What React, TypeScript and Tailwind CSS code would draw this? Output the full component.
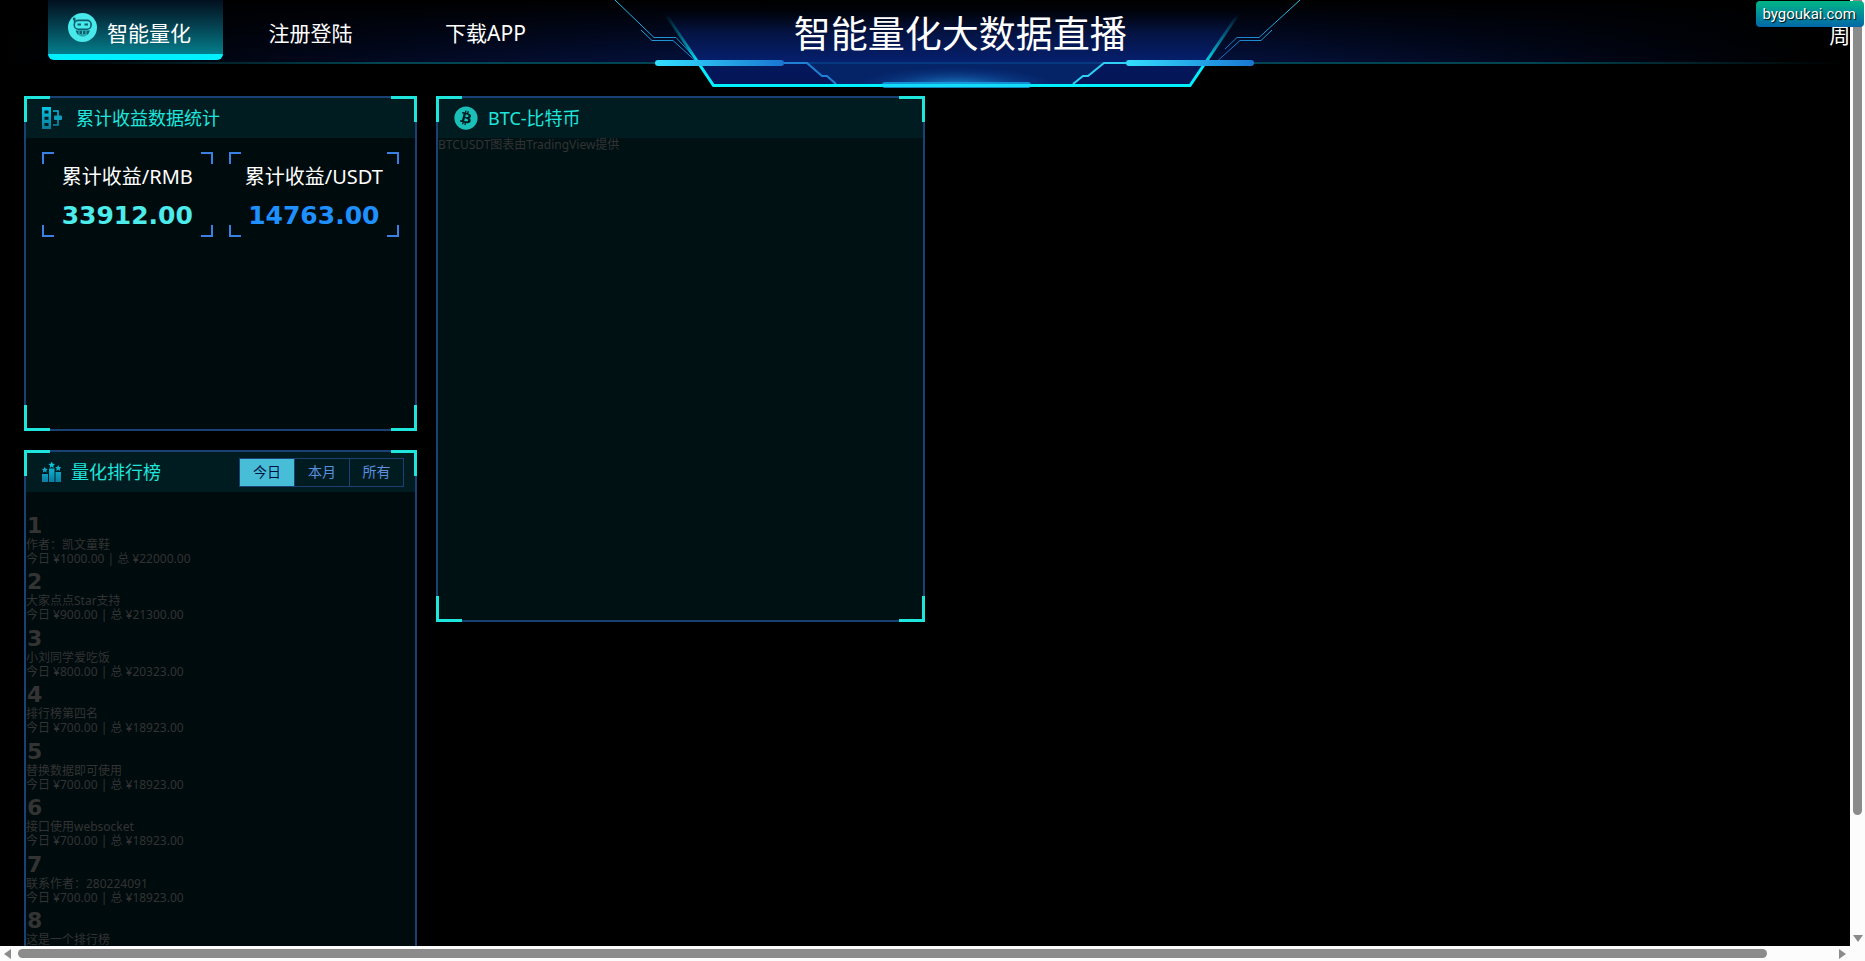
import {FC, ReactNode, useState} from "react";
import {FaBitcoin} from "react-icons/fa";

const navItems = ["智能量化", "注册登陆", "下载APP"];
const ranges = ["今日", "本月", "所有"];

const ranking = [
    {name: "作者：凯文童鞋", today: "1000.00", total: "22000.00"},
    {name: "大家点点Star支持", today: "900.00", total: "21300.00"},
    {name: "小刘同学爱吃饭", today: "800.00", total: "20323.00"},
    {name: "排行榜第四名", today: "700.00", total: "18923.00"},
    {name: "替换数据即可使用", today: "700.00", total: "18923.00"},
    {name: "接口使用websocket", today: "700.00", total: "18923.00"},
    {name: "联系作者：280224091", today: "700.00", total: "18923.00"},
    {name: "这是一个排行榜", today: "700.00", total: "18923.00"},
];

const RobotIcon: FC = () => (
    <svg width="29" height="29" viewBox="0 0 29 29" fill="none">
        <circle cx="14.5" cy="14.5" r="14.5" fill="#48e9ea"/>
        <circle cx="6.2" cy="6" r="1.4" fill="#0b5e6b"/>
        <path d="M6.5 6v3.5" stroke="#0b5e6b" strokeWidth="1.4"/>
        <rect x="6.3" y="7.4" width="16.8" height="8.8" rx="4" stroke="#0b5e6b" strokeWidth="1.6"/>
        <path d="M9.5 11.5h3.5M16.5 11.5h3.5" stroke="#0b5e6b" strokeWidth="2"/>
        <path d="M7.5 17.5h14.5l-2 4h-10.5z" fill="#0b5e6b"/>
        <path d="M11 18v3M14.5 18v3M18 18v3" stroke="#48e9ea" strokeWidth="0.8"/>
        <path d="M10.5 22.3h8.5q-4.2 2.6-8.5 0z" fill="#1a919c"/>
    </svg>
);

const StatsIcon: FC = () => (
    <svg width="20" height="22" viewBox="0 0 20 22" fill="none">
        <defs>
            <linearGradient id="stats" x1="0" y1="0" x2="0" y2="22" gradientUnits="userSpaceOnUse">
                <stop stopColor="#08c8e8"/>
                <stop offset="1" stopColor="#0b7896"/>
            </linearGradient>
        </defs>
        <path d="M0 0h9v22h-9zM2.500 3.500v3h4v-3zM2.500 9.800v3h4v-3zM2.500 16.100v3h4v-3z" fill="url(#stats)" fillRule="evenodd"/>
        <path d="M11 4h5v14h-5" stroke="url(#stats)" strokeWidth="1.6"/>
        <rect x="12" y="8.5" width="8" height="4.5" rx="1" fill="#0e9fbc"/>
    </svg>
);

const RankIcon: FC = () => (
    <svg width="19" height="20" viewBox="0 0 19 20">
        <defs>
            <linearGradient id="rank" x1="0" y1="0" x2="0" y2="20" gradientUnits="userSpaceOnUse">
                <stop stopColor="#0ccfe6"/>
                <stop offset="1" stopColor="#0b7ba0"/>
            </linearGradient>
        </defs>
        <g fill="url(#rank)">
            <path d="M0 12h6v8h-6zM7 6.5h5.500v13.500h-5.500zM13.500 10h5.500v10h-5.500z"/>
            <path d="M9.700 -.4l1 2.100 2.300.3-1.700 1.600.4 2.300-2-1.200-2 1.200.4-2.300-1.700-1.600 2.300-.3z"/>
            <path d="M2.800 4.700l.9 2 2.100.2-1.500 1.500.4 2.200-1.900-1.100-1.900 1.100.4-2.200-1.500-1.500 2.100-.2z"/>
            <path d="M16.200 3l.9 2 2.100.2-1.500 1.500.4 2.200-1.900-1.100-1.900 1.100.4-2.200-1.500-1.500 2.100-.2z"/>
        </g>
    </svg>
);

// Trapezoid plate and circuit lines behind the title
const TitleFrame: FC = () => (
    <svg className="absolute inset-0" width="690" height="92" viewBox="615 0 690 92" fill="none">
        <defs>
            <linearGradient id="plate" x1="0" y1="0" x2="0" y2="86" gradientUnits="userSpaceOnUse">
                <stop stopColor="#000000"/>
                <stop offset="0.12" stopColor="#000208"/>
                <stop offset="0.4" stopColor="#041445"/>
                <stop offset="0.72" stopColor="#06206f"/>
                <stop offset="0.73" stopColor="#04185c"/>
                <stop offset="1" stopColor="#041556"/>
            </linearGradient>
            <linearGradient id="edge" x1="0" y1="15" x2="0" y2="66" gradientUnits="userSpaceOnUse">
                <stop stopColor="#00f0ff" stopOpacity="0"/>
                <stop offset="0.3" stopColor="#00c8d4" stopOpacity="0.3"/>
                <stop offset="1" stopColor="#00f0ff"/>
            </linearGradient>
            <linearGradient id="bar" x1="0" y1="0" x2="1" y2="0">
                <stop stopColor="#33dfff"/>
                <stop offset="1" stopColor="#1976d2"/>
            </linearGradient>
            <linearGradient id="wireLeft" x1="615" y1="0" x2="697" y2="60" gradientUnits="userSpaceOnUse">
                <stop stopColor="#2cc3e6"/>
                <stop offset="1" stopColor="#1976c8"/>
            </linearGradient>
            <linearGradient id="wireRight" x1="1300" y1="0" x2="1220" y2="60" gradientUnits="userSpaceOnUse">
                <stop stopColor="#2cc3e6"/>
                <stop offset="1" stopColor="#1668c0"/>
            </linearGradient>
            <radialGradient id="glow">
                <stop stopColor="#1e9be0" stopOpacity="0.9"/>
                <stop offset="0.5" stopColor="#1462b0" stopOpacity="0.5"/>
                <stop offset="1" stopColor="#0a3a8c" stopOpacity="0"/>
            </radialGradient>
            <clipPath id="plateClip">
                <path d="M656 0h594l-60 86h-477z"/>
            </clipPath>
        </defs>
        <path d="M656 0h594l-60 86h-477z" fill="url(#plate)"/>
        <path d="M697 63h522" stroke="#053a80" strokeWidth="2"/>
        <g clipPath="url(#plateClip)">
            <path d="M807 64l15 12h5l9 9h237l10-9h5l16-12z" fill="#052468"/>
            <ellipse cx="956" cy="86" rx="100" ry="19" fill="url(#glow)"/>
        </g>
        <path d="M615 0l39 37.500h22l21 22.500M641 30l11 10.500h21l22 20" stroke="url(#wireLeft)"/>
        <path d="M1300 0l-41 37.500h-22l-12 11.500M1272 30l-11 10.500h-21l-22 20" stroke="url(#wireRight)"/>
        <path d="M784 63h23l15 13h5l9 8" stroke="#1f80d4" strokeWidth="2"/>
        <path d="M1126 63h-22l-16 13h-5l-10 8" stroke="#2fd0f4" strokeWidth="2"/>
        <path d="M663 10l50.500 75.500h476.500l51-75.500" stroke="url(#edge)" strokeWidth="3"/>
        <rect x="882" y="82" width="149" height="6" rx="3" fill="#16a4e6" opacity="0.8"/>
        <path d="M882 85.500h149" stroke="#12dcf8" strokeWidth="3"/>
        <rect x="655" y="60" width="129" height="6" rx="3" fill="url(#bar)"/>
        <rect x="1126" y="60" width="128" height="6" rx="3" fill="url(#bar)"/>
    </svg>
);

const Panel: FC<{className?: string; children: ReactNode}> = ({className = "", children}) => (
    <section className={`relative border-2 border-[#1a4173] ${className}`}>
        <i className="absolute -top-0.5 -left-0.5 size-[26px] border-t-3 border-l-3 border-[#1fe6dc]"/>
        <i className="absolute -top-0.5 -right-0.5 size-[26px] border-t-3 border-r-3 border-[#1fe6dc]"/>
        <i className="absolute -bottom-0.5 -left-0.5 size-[26px] border-b-3 border-l-3 border-[#1fe6dc]"/>
        <i className="absolute -right-0.5 -bottom-0.5 size-[26px] border-r-3 border-b-3 border-[#1fe6dc]"/>
        {children}
    </section>
);

const PanelHeader: FC<{children: ReactNode}> = ({children}) => (
    <header className="flex h-10 items-center bg-[#011c21] pr-[11px] pl-4 text-lg text-[#1fe6dc]">
        {children}
    </header>
);

const StatBox: FC<{label: string; value: string; color: string}> = ({label, value, color}) => (
    <div className="relative flex h-[85px] flex-1 flex-col items-center pt-[5px]">
        <i className="absolute top-0 left-0 size-3 border-t-2 border-l-2 border-[#3a80e4]"/>
        <i className="absolute top-0 right-0 size-3 border-t-2 border-r-2 border-[#3a80e4]"/>
        <i className="absolute bottom-0 left-0 size-3 border-b-2 border-l-2 border-[#3a80e4]"/>
        <i className="absolute right-0 bottom-0 size-3 border-r-2 border-b-2 border-[#3a80e4]"/>
        <span className="text-xl leading-10 text-white">{label}</span>
        <span className={`font-['DejaVu_Sans'] text-[25px] leading-[38px] font-bold ${color}`}>{value}</span>
    </div>
);

const App: FC = () => {
    const [range, setRange] = useState<string>("今日");

    return (
        <div className="relative grid h-screen grid-cols-[1fr_15px] grid-rows-[1fr_15px] overflow-hidden bg-[#fcfcfc] font-['Noto_Sans','Noto_Sans_CJK_SC',sans-serif]">
            <div className="overflow-hidden bg-black">
                <div className="w-[103.8%]">
                    <header className="grid h-16 grid-cols-[1fr_690px_1fr] border-b-2 border-[#024552] bg-[linear-gradient(to_bottom,#000,transparent),linear-gradient(to_right,#000,#03103a_35%,#03103a_65%,#000_94%)] [border-image:linear-gradient(to_right,transparent_3%,#024552_20%,#024552_80%,transparent_96%)_1]">
                        <nav className="flex pl-12">
                            {navItems.map((item, index) => (
                                <a
                                    key={item}
                                    href="#"
                                    className={`flex h-15 w-[175px] items-center text-[21px] text-white ${index === 0 ? "gap-2.5 rounded-b-md border-b-6 border-[#00f0ff] bg-linear-to-b from-[#02101f] to-[#037f8c] pl-5" : "justify-center pt-2"}`}
                                >
                                    {index === 0 && <RobotIcon/>}
                                    <span className={index === 0 ? "pt-3.5" : ""}>{item}</span>
                                </a>
                            ))}
                        </nav>
                        <div className="relative text-center">
                            <TitleFrame/>
                            <h1 className="relative text-[37px] leading-[68px] text-white">智能量化大数据直播</h1>
                        </div>
                        <div className="flex items-center justify-end pt-1 pr-[70px] text-[21px] text-white">周</div>
                    </header>

                    <main className="grid grid-cols-[393fr_489fr_952fr] items-start gap-[19px] px-6 pt-8">
                        <div className="flex flex-col gap-[19px]">
                            <Panel className="h-[335px] bg-[#000b0d]">
                                <PanelHeader>
                                    <StatsIcon/>
                                    <h2 className="ml-3.5">累计收益数据统计</h2>
                                </PanelHeader>
                                <div className="flex gap-4 px-4 pt-3.5">
                                    <StatBox label="累计收益/RMB" value="33912.00" color="text-[#4debeb]"/>
                                    <StatBox label="累计收益/USDT" value="14763.00" color="text-[#1e90ff]"/>
                                </div>
                            </Panel>

                            <Panel className="bg-[#000b0d]">
                                <PanelHeader>
                                    <RankIcon/>
                                    <h2 className="ml-2.5">量化排行榜</h2>
                                    <div className="ml-auto flex border border-[#1a4173]">
                                        {ranges.map((item) => (
                                            <button
                                                key={item}
                                                type="button"
                                                onClick={() => setRange(item)}
                                                className={`h-[27px] w-[55px] border-r border-[#1a4173] text-sm last:w-[53px] last:border-r-0 ${item === range ? "bg-[#48bdd8] text-[#03123f]" : "text-[#5a90e0]"}`}
                                            >
                                                {item}
                                            </button>
                                        ))}
                                    </div>
                                </PanelHeader>
                                <ol className="pt-5 pb-10 text-xs leading-3.5 text-[#333333]">
                                    {ranking.map((row, index) => (
                                        <li key={row.name} className="odd:h-14 even:h-[57px]">
                                            <div className="pt-0.5 pl-px font-['DejaVu_Sans'] text-[22px] leading-6 font-bold">{index + 1}</div>
                                            <div>{row.name}</div>
                                            <div>今日 ¥{row.today} | 总 ¥{row.total}</div>
                                        </li>
                                    ))}
                                </ol>
                            </Panel>
                        </div>

                        <Panel className="h-[526px] bg-[#001114]">
                            <PanelHeader>
                                <FaBitcoin className="size-6 text-[#1abfb8]"/>
                                <h2 className="ml-2.5">BTC-比特币</h2>
                            </PanelHeader>
                            <p className="text-xs leading-3.5 text-[#333333]">BTCUSDT图表由TradingView提供</p>
                        </Panel>
                    </main>
                </div>
            </div>

            {/* Vertical scrollbar */}
            <div className="flex flex-col items-center">
                <div className="h-[815px] w-[9px] rounded-b-full bg-[#8b8b8b]"/>
                <div className="mt-auto mb-1 border-x-5 border-t-7 border-x-transparent border-t-[#8b8b8b]"/>
            </div>

            {/* Horizontal scrollbar */}
            <div className="flex items-center px-1">
                <div className="border-y-5 border-r-7 border-y-transparent border-r-[#8b8b8b]"/>
                <div className="mr-[72px] ml-[7px] h-[9px] flex-1 rounded-full bg-[#8b8b8b]"/>
                <div className="border-y-5 border-l-7 border-y-transparent border-l-[#8b8b8b]"/>
            </div>

            <a
                href="#"
                className="absolute top-px right-px flex h-[26px] items-center rounded-sm bg-linear-to-b from-[#07b584] to-[#0366a6] pr-2 pl-1.5 font-['Roboto',sans-serif] text-[15px] text-white [text-shadow:1px_1px_1px_#000]"
            >
                bygoukai.com
            </a>
        </div>
    );
};

export default App;
